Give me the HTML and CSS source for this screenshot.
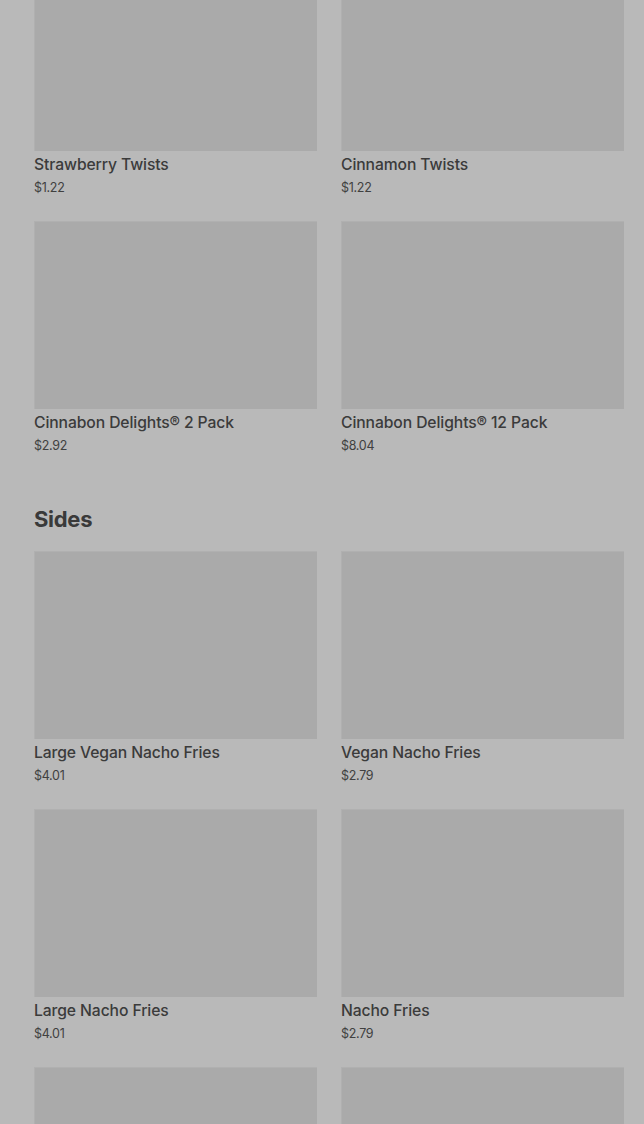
FILE: index.html
```html
<!DOCTYPE html>
<html lang="en">
<head>
<meta charset="utf-8">
<title>Menu</title>
<link rel="stylesheet" href="styles.css">
</head>
<body>
<main class="menu">
  <section class="category category-first">
    <div class="grid">
      <div class="card"><div class="thumb"></div><div class="name">Strawberry Twists</div><div class="price">$1.22</div></div>
      <div class="card"><div class="thumb"></div><div class="name">Cinnamon Twists</div><div class="price">$1.22</div></div>
      <div class="card"><div class="thumb"></div><div class="name">Cinnabon Delights® 2 Pack</div><div class="price">$2.92</div></div>
      <div class="card"><div class="thumb"></div><div class="name">Cinnabon Delights® 12 Pack</div><div class="price">$8.04</div></div>
    </div>
  </section>
  <section class="category">
    <h2 class="heading">Sides</h2>
    <div class="grid">
      <div class="card"><div class="thumb"></div><div class="name">Large Vegan Nacho Fries</div><div class="price">$4.01</div></div>
      <div class="card"><div class="thumb"></div><div class="name">Vegan Nacho Fries</div><div class="price">$2.79</div></div>
      <div class="card"><div class="thumb"></div><div class="name">Large Nacho Fries</div><div class="price">$4.01</div></div>
      <div class="card"><div class="thumb"></div><div class="name">Nacho Fries</div><div class="price">$2.79</div></div>
      <div class="card"><div class="thumb"></div></div>
      <div class="card"><div class="thumb"></div></div>
    </div>
  </section>
</main>
</body>
</html>
```

FILE: styles.css
```css
html, body {
  margin: 0;
  padding: 0;
  background: #b9b9b9;
  overflow: hidden;
  height: 1124px;
}
body {
  font-family: Inter, "Noto Sans", "Liberation Sans", sans-serif;
  color: #3a3a3a;
}
.menu {
  padding: 0 20px 0 34px;
}
.category-first {
  margin-top: -37px;
}
.grid {
  display: grid;
  grid-template-columns: 1fr 1fr;
  column-gap: 24px;
  row-gap: 24px;
}
.card {
  display: flex;
  flex-direction: column;
}
.thumb {
  height: 188px;
  background: #aaaaaa;
  box-shadow: inset 1px 1px 0 #b0b0b0;
}
.name {
  margin-top: 4px;
  font-size: 15.7px;
  line-height: 20px;
  font-weight: 500;
  color: #3b3b3b;
  letter-spacing: -0.1px;
}
.price {
  margin-top: 4px;
  font-size: 12.5px;
  line-height: 18px;
  color: #404040;
  letter-spacing: -0.3px;
}
.heading {
  margin: 50px 0 18px;
  font-size: 22px;
  line-height: 28px;
  font-weight: 700;
  color: #3a3a3a;
  letter-spacing: -0.3px;
}
```
